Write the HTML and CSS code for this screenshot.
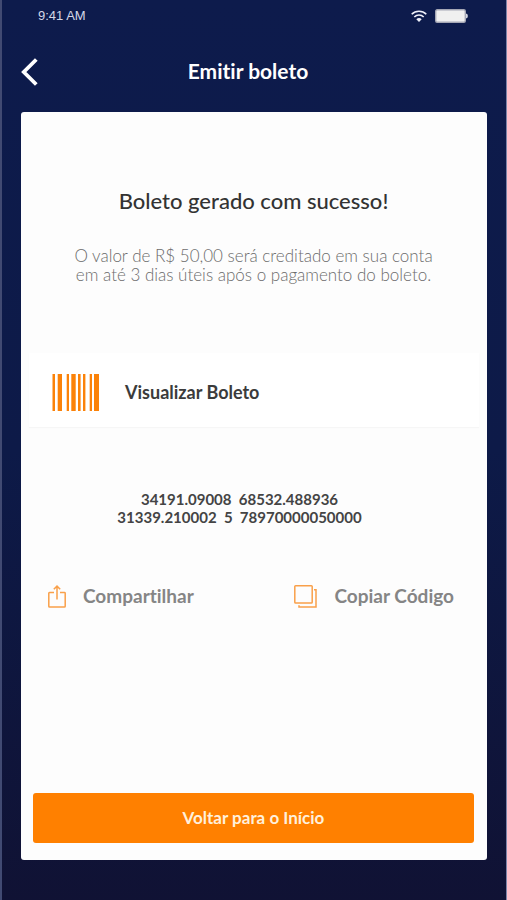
FILE: index.html
```html
<!DOCTYPE html>
<html lang="pt-BR">
<head>
<meta charset="utf-8">
<meta name="viewport" content="width=device-width, initial-scale=1">
<title>Emitir boleto</title>
<link rel="stylesheet" href="styles.css">
</head>
<body>
<div class="screen">
  <div class="status">
    <span>9:41 AM</span>
    <div class="status-icons">
      <svg width="16" height="12" viewBox="0 0 16 12" fill="none" stroke="#eef0fa" stroke-width="1.6">
        <path d="M.7 4.2C4.7.2 11.3.2 15.3 4.2M3.3 7C6 4.300 10 4.300 12.700 7"/>
        <path d="M5.300 9.300Q8 6.900 10.700 9.300L8 12Z" fill="#eef0fa" stroke="none"/>
      </svg>
      <svg width="34" height="14" viewBox="0 0 34 14">
        <rect x="1.700" y=".7" width="29.600" height="12.600" rx="1.500" fill="#f0f0f0" stroke="#a5a7b5" stroke-width="1.400"/>
        <path d="M32 4.500Q33.900 4.800 33.900 7T32 9.500Z" fill="#d5d7e2"/>
      </svg>
    </div>
  </div>
  <header class="header">
    <button class="back" type="button" aria-label="Voltar">
      <svg width="18" height="28" viewBox="0 0 18 28" fill="none" stroke="#fff" stroke-width="3.800"><path d="M15.300 1.500 2.800 14 15.300 26.500"/></svg>
    </button>
    <h1>Emitir boleto</h1>
  </header>
  <main class="card">
    <h2>Boleto gerado com sucesso!</h2>
    <p class="info">O valor de R$ 50,00 será creditado em sua conta<br>em até 3 dias úteis após o pagamento do boleto.</p>
    <button class="view" type="button">
      <svg width="48" height="37" viewBox="0 0 48 37" fill="#fb8209">
        <path d="M.5 0h2.500v37H.5zM5.700 0H10v37H5.700zM14.700 0H17v37h-2.300zM19.300 0h4.400v37h-4.400zM26 0h2.600v37H26zM31 0h2.400v37H31zM37.700 0H40v37h-2.300zM42 0h5v37h-5z"/>
      </svg>
      <span>Visualizar Boleto</span>
    </button>
    <p class="code"><span>34191.09008&nbsp; 68532.488936</span><span>31339.210002&nbsp; 5&nbsp; 78970000050000</span></p>
    <div class="actions">
      <button class="action" type="button">
        <svg width="18" height="23" viewBox="0 0 18 23" fill="none" stroke="#f9a04a" stroke-width="1.500"><path d="M6 7.500H1.500Q.8 7.500.8 8.200V21.200Q.8 22 1.500 22H16.500Q17.200 22 17.200 21.200V8.200Q17.200 7.500 16.500 7.500H12M9 14.500V1.200M5.800 4.300 9 1.100 12.200 4.300"/></svg>
        <span>Compartilhar</span>
      </button>
      <button class="action" type="button">
        <svg width="23" height="23" viewBox="0 0 23 23" fill="none" stroke="#f9a04a" stroke-width="1.500"><rect x=".8" y=".8" width="17.400" height="17.200" rx=".8"/><path d="M20 4.800H22V22H5V20.200"/></svg>
        <span>Copiar Código</span>
      </button>
    </div>
    <button class="home" type="button">Voltar para o Início</button>
  </main>
</div>
</body>
</html>
```

FILE: styles.css
```css
* { box-sizing: border-box; }
body {
  margin: 0;
  font-family: Lato, "Open Sans", sans-serif;
  font-variant-ligatures: none;
}
h1, h2, p { margin: 0; }
button {
  border: 0;
  padding: 0;
  background: none;
  font: inherit;
  font-variant-ligatures: none;
  color: inherit;
  cursor: pointer;
}
svg { display: block; flex: none; }
.screen {
  min-height: 100vh;
  display: flex;
  flex-direction: column;
  padding: 0 19px 40px;
  border-left: 2px solid #414a72;
  border-right: 1px solid #7c84a8;
  background: linear-gradient(#0d1b4c, #0d1a48 50%, #101234);
}
.status {
  display: flex;
  justify-content: space-between;
  align-items: center;
  height: 32px;
  padding: 0 19px 0 17px;
  font: 13px/30px "Liberation Sans", sans-serif;
  color: #d3d7e6;
}
.status-icons { display: flex; align-items: center; gap: 7px; }
.header {
  display: grid;
  grid-template-columns: 18px 1fr 30px;
  align-items: center;
  height: 80px;
}
h1 {
  padding-bottom: 2px;
  text-align: center;
  font-size: 21px;
  line-height: 24px;
  color: #fff;
}
.card {
  flex: 1;
  display: flex;
  flex-direction: column;
  padding: 75px 13px 17px 12px;
  border-radius: 3px;
  background: #fdfdfd;
}
h2 {
  text-align: center;
  font-size: 22px;
  line-height: 28px;
  font-weight: 500;
  color: #333;
}
.info {
  margin-top: 31px;
  text-align: center;
  font-size: 17px;
  line-height: 19px;
  font-weight: 300;
  color: #6c6c6c;
}
.view {
  display: flex;
  align-items: center;
  gap: 25px;
  height: 74px;
  margin: 69px -5px 0 -4px;
  padding: 4px 0 0 23px;
  background: #fff;
  box-shadow: 0 1px 1px #f6f6f6;
  font-size: 18px;
  font-weight: 700;
  color: #3b3b3b;
}
.code {
  display: flex;
  flex-direction: column;
  align-items: center;
  margin-top: 63px;
  padding-right: 28px;
  font-size: 15px;
  line-height: 18px;
  font-weight: 700;
  color: #444;
}
.actions {
  display: flex;
  justify-content: space-between;
  margin: 58px 20px 0 15px;
}
.action {
  display: flex;
  align-items: center;
  gap: 17px;
  font-size: 19px;
  line-height: 24px;
  font-weight: 700;
  color: #858585;
}
.home {
  height: 50px;
  margin-top: auto;
  padding-bottom: 2px;
  border-radius: 3px;
  background: #ff8000;
  font-size: 17px;
  font-weight: 700;
  color: #fff0dc;
}
```
